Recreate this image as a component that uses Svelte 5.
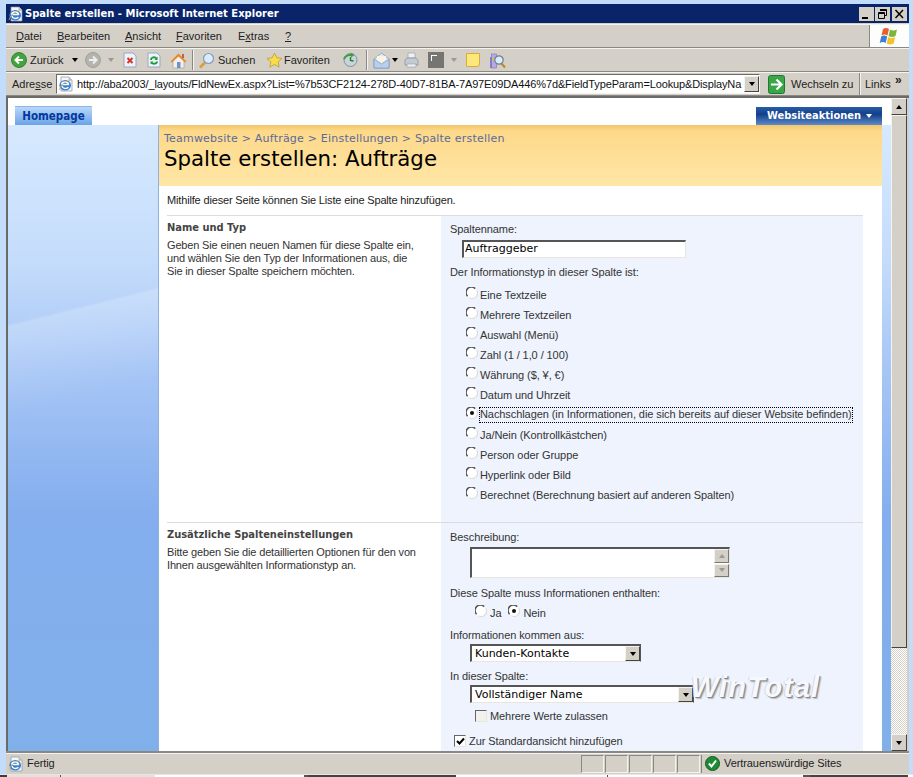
<script>
  const types = ['Eine Textzeile','Mehrere Textzeilen','Auswahl (Menü)','Zahl (1 / 1,0 / 100)','Währung ($, ¥, €)','Datum und Uhrzeit','Nachschlagen (in Informationen, die sich bereits auf dieser Website befinden)','Ja/Nein (Kontrollkästchen)','Person oder Gruppe','Hyperlink oder Bild','Berechnet (Berechnung basiert auf anderen Spalten)'];
  const selected = 6;
  const url = 'http://aba2003/_layouts/FldNewEx.aspx?List=%7b53CF2124-278D-40D7-81BA-7A97E09DA446%7d&FieldTypeParam=Lookup&DisplayNa';
</script>

{#snippet radio(on)}
  <svg class="radio" width="12" height="12" viewBox="0 0 12 12">
    <circle cx="6" cy="6" r="5.5" fill="#fff"/>
    <path d="M1.6 9.2A5.2 5.2 0 0 1 9.2 1.6" fill="none" stroke="#555" stroke-width="1.5"/>
    <path d="M10.6 3.4A5.2 5.2 0 0 1 3.4 10.6" fill="none" stroke="#dedcd6" stroke-width="1.1"/>
    {#if on}<circle cx="6" cy="6" r="2" fill="#111"/>{/if}
  </svg>
{/snippet}

{#snippet ie(size)}
  <svg width={size} height={size} viewBox="0 0 16 16">
    <path d="M3 1h8l3 3v11H3z" fill="#f4f6fa" stroke="#8a94a6" stroke-width=".7"/>
    <path d="M11 1v3h3" fill="#cdd6e6" stroke="#8a94a6" stroke-width=".5"/>
    <ellipse cx="7.2" cy="9.3" rx="5.8" ry="5.2" fill="#3a7fd0"/>
    <path d="M3.6 8.5h7.2M4 10c.4 2.6 4.6 3.2 6.4 1.3" stroke="#fff" stroke-width="1.4" fill="none"/>
    <path d="M3.6 8.4C4 5.4 9.6 5 10.8 8.4" stroke="#fff" stroke-width="1.4" fill="none"/>
    <path d="M1 14C2 10 7 5 13 4" stroke="#e6b93c" stroke-width=".8" fill="none"/>
  </svg>
{/snippet}

{#snippet dropBtn()}
  <span class="dropbtn"><i class="tri"></i></span>
{/snippet}

<div class="desktop">
  <div class="window">
    <div class="titlebar">
      <span class="ticon">{@render ie(16)}</span>
      <span class="ttext">Spalte erstellen - Microsoft Internet Explorer</span>
      <div class="wbtns">
        <span class="wbtn"><svg width="15" height="14" viewBox="0 0 15 14"><rect x="3" y="10" width="6" height="2" fill="#000"/></svg></span>
        <span class="wbtn"><svg width="15" height="14" viewBox="0 0 15 14"><path d="M5.5 2.5h6v6h-2M5.500 2v2M3.500 5.500h6v6h-6zM3.500 6.500h6M5.500 3.500h6" fill="none" stroke="#000"/></svg></span>
        <span class="wbtn last"><svg width="15" height="14" viewBox="0 0 15 14"><path d="M3.500 3l7.500 8M11 3l-7.500 8" stroke="#000" stroke-width="1.500"/></svg></span>
      </div>
    </div>

    <div class="menubar">
      <div class="menus">
        <span><u>D</u>atei</span><span><u>B</u>earbeiten</span><span><u>A</u>nsicht</span><span><u>F</u>avoriten</span><span>E<u>x</u>tras</span><span><u>?</u></span>
      </div>
      <div class="logo">
        <svg width="22" height="20" viewBox="0 0 22 20">
          <path d="M4 3c2-1.500 4-1.500 6 0l-1.500 6.500c-2-1.300-4-1.300-6 0z" fill="#e8602c"/>
          <path d="M11 3.500c2 1.300 4.500 1.300 7 0l-1.500 6.500c-2.500 1.300-5 1.300-7 0z" fill="#7cb53c"/>
          <path d="M2.200 10.500c2-1.300 4-1.300 6 0L6.700 17c-2-1.300-4-1.300-6 0z" fill="#3d7fd8"/>
          <path d="M9.200 11c2 1.300 4.500 1.300 7 0l-1.500 6.500c-2.500 1.300-5 1.300-7 0z" fill="#f2c230"/>
        </svg>
      </div>
    </div>

    <div class="toolbar">
      <svg class="i back" width="16" height="16" viewBox="0 0 16 16"><circle cx="8" cy="8" r="7.500" fill="#3fa53c" stroke="#1f7a2a" stroke-width=".8"/><path d="M12 8H5M8 4.500L4.500 8 8 11.500" stroke="#fff" stroke-width="2" fill="none"/></svg>
      <span class="tl zur">Zurück</span>
      <i class="tri a1"></i>
      <svg class="i fwd" width="16" height="16" viewBox="0 0 16 16"><circle cx="8" cy="8" r="7.500" fill="#b4b4ae" stroke="#98988f" stroke-width=".8"/><path d="M4 8h7M8 4.500L11.500 8 8 11.500" stroke="#eee" stroke-width="2" fill="none"/></svg>
      <i class="tri a2 gr"></i>
      <svg class="i stop" width="14" height="16" viewBox="0 0 14 16"><path d="M1 1h9l3 3v11H1z" fill="#eef2fa" stroke="#9aa6c0"/><path d="M4.500 6l5 5M9.500 6l-5 5" stroke="#d8352a" stroke-width="2"/></svg>
      <svg class="i ref" width="14" height="16" viewBox="0 0 14 16"><path d="M1 1h9l3 3v11H1z" fill="#eef2fa" stroke="#9aa6c0"/><path d="M4 8c0-3 4-3.500 5.500-1.500M10 9.500c0 2.500-4 3-5.500 1" stroke="#1e9a3c" stroke-width="1.800" fill="none"/><path d="M10.500 4.500v3.500H7.500M3.500 12.500V9.500h3" fill="#1e9a3c"/></svg>
      <svg class="i home" width="17" height="17" viewBox="0 0 17 17"><path d="M3 8v8h11V8L8.500 3z" fill="#f2f0ea" stroke="#a8a498" stroke-width=".7"/><path d="M.5 9.500L8.500 1.500l8 8-1.500 1L8.500 4.500 2 10.500z" fill="#e8862e"/><rect x="12" y="2" width="2" height="4" fill="#b8663a"/><rect x="7" y="10" width="3.500" height="6" fill="#6f93c8"/></svg>
      <span class="sep s1"></span>
      <svg class="i srch" width="17" height="17" viewBox="0 0 17 17"><circle cx="10.500" cy="6.500" r="5" fill="#dcecfb" stroke="#7f9cc0" stroke-width="1.200"/><path d="M7 10.500l-5 5" stroke="#d6a040" stroke-width="2.800"/></svg>
      <span class="tl such">Suchen</span>
      <svg class="i star" width="17" height="17" viewBox="0 0 17 17"><path d="M8.500 1l2.200 4.800 5.300.6-3.900 3.500 1.100 5.200-4.700-2.700-4.700 2.700 1.100-5.200L1 6.400l5.300-.6z" fill="#f8dc4a" stroke="#c09a30" stroke-width=".8"/></svg>
      <span class="tl fav">Favoriten</span>
      <svg class="i hist" width="16" height="16" viewBox="0 0 16 16"><circle cx="8.500" cy="8" r="6.500" fill="#c8d4dc" stroke="#7f93a4"/><path d="M1 6.500C3 3 6 1.500 9 2l-.5-1.500 4 2.500-3.500 2.500V4C6 3.500 4 5 3 7.500z" fill="#3e9e3e"/><path d="M8.500 5v3.500l3 .5" stroke="#2b7a2b" stroke-width="1.400" fill="none"/></svg>
      <span class="sep s2"></span>
      <svg class="i mail" width="17" height="17" viewBox="0 0 17 17"><path d="M1 7l7.500-6L16 7v9H1z" fill="#dbe8f8" stroke="#7f9cc8" stroke-width=".8"/><path d="M4 4h9v4l-4.500 3L4 8z" fill="#fbf3dc"/><path d="M1 7l7.500 5L16 7v9H1z" fill="#b8d0ee" stroke="#7f9cc8" stroke-width=".8"/></svg>
      <i class="tri a3"></i>
      <svg class="i prn" width="15" height="16" viewBox="0 0 15 16"><path d="M4 1h7v5H4z" fill="#eef0f4" stroke="#9aa2ad" stroke-width=".7"/><path d="M1 8l2-2h9l2 2v5H1z" fill="#c4cad2" stroke="#868e98" stroke-width=".7"/><path d="M3 12h9v3H3z" fill="#f0f2f5" stroke="#9aa2ad" stroke-width=".7"/></svg>
      <span class="graybox"><span></span></span>
      <i class="tri a4 gr"></i>
      <span class="note"></span>
      <svg class="i res" width="17" height="17" viewBox="0 0 17 17"><rect x="1" y="5" width="5" height="11" fill="#8a80c8"/><rect x="2.500" y="2" width="5" height="14" fill="#b4ace0" stroke="#6a62a8" stroke-width=".5"/><rect x="3" y="6" width="2" height="2" fill="#e8b840"/><circle cx="10" cy="8" r="4.200" fill="#d8ecfa" stroke="#6f7f92" stroke-width="1.200"/><path d="M12.500 11.500l3.500 4" stroke="#b88a30" stroke-width="2"/></svg>
    </div>

    <div class="addrbar">
      <span class="addrlbl">Adre<u>s</u>se</span>
      <div class="addr">
        <span class="addri">{@render ie(16)}</span>
        <span class="url">{url}</span>
        {@render dropBtn()}
      </div>
      <svg class="goi" width="17" height="19" viewBox="0 0 17 19"><rect x=".5" y=".5" width="16" height="18" rx="2" fill="#3aa648" stroke="#1f7a30"/><path d="M3 9.500h10M8.500 4.500l5 5-5 5" stroke="#fff" stroke-width="2.200" fill="none"/></svg>
      <span class="go">Wechseln zu</span>
      <span class="links">Links</span>
      <span class="chev">»</span>
    </div>

    <div class="viewport">
      <div class="page">
        <div class="tabs">
          <span class="tab">Homepage</span>
          <span class="actions">Websiteaktionen<i class="tri w"></i></span>
        </div>
        <div class="body">
          <div class="side"></div>
          <div class="main">
            <div class="head">
              <div class="crumb">Teamwebsite &gt; Aufträge &gt; Einstellungen &gt; Spalte erstellen</div>
              <h1>Spalte erstellen: Aufträge</h1>
            </div>
            <p class="intro">Mithilfe dieser Seite können Sie Liste eine Spalte hinzufügen.</p>

            <section class="sec one">
              <div class="info">
                <h2>Name und Typ</h2>
                <p>Geben Sie einen neuen Namen für diese Spalte ein,<br>und wählen Sie den Typ der Informationen aus, die<br>Sie in dieser Spalte speichern möchten.</p>
              </div>
              <div class="form">
                <div class="lbl">Spaltenname:</div>
                <div class="input name">Auftraggeber</div>
                <div class="lbl l2">Der Informationstyp in dieser Spalte ist:</div>
                <div class="types">
                  {#each types as t, i}
                    <div class="type">{@render radio(i === selected)}<span class:focus={i === selected}>{t}</span></div>
                  {/each}
                </div>
              </div>
            </section>

            <section class="sec two">
              <div class="info">
                <h2>Zusätzliche Spalteneinstellungen</h2>
                <p>Bitte geben Sie die detaillierten Optionen für den von<br>Ihnen ausgewählten Informationstyp an.</p>
              </div>
              <div class="form">
                <div class="lbl">Beschreibung:</div>
                <div class="input area">
                  <div class="spin"><span><i class="tri up gr"></i></span><span><i class="tri gr"></i></span></div>
                </div>
                <div class="lbl l3">Diese Spalte muss Informationen enthalten:</div>
                <div class="yn">{@render radio(false)}<span class="ja">Ja</span>{@render radio(true)}<span>Nein</span></div>
                <div class="lbl l4">Informationen kommen aus:</div>
                <div class="input sel s-a">Kunden-Kontakte{@render dropBtn()}</div>
                <div class="lbl l5">In dieser Spalte:</div>
                <div class="input sel s-b">Vollständiger Name{@render dropBtn()}</div>
                <div class="chk c-a"><span class="cb"></span>Mehrere Werte zulassen</div>
                <div class="chk c-b"><span class="cb"><svg width="9" height="9" viewBox="0 0 9 9"><path d="M1 4l2.500 2.500L8 1.500" fill="none" stroke="#000" stroke-width="2"/></svg></span>Zur Standardansicht hinzufügen</div>
              </div>
            </section>
          </div>
          <div class="strip"></div>
        </div>
        <div class="mark">WinTotal</div>
      </div>
      <div class="scroll">
        <span class="sb"><i class="tri up"></i></span>
        <span class="thumb"></span>
        <span class="track"></span>
        <span class="sb"><i class="tri"></i></span>
      </div>
    </div>

    <div class="status">
      <span class="sti">{@render ie(16)}</span>
      <span class="stt">Fertig</span>
      <div class="panes"><span></span><span></span><span></span><span></span><span></span></div>
      <div class="zone">
        <svg width="15" height="15" viewBox="0 0 15 15"><circle cx="7.500" cy="7.500" r="7" fill="#1f8a34" stroke="#115f22"/><path d="M4 7.500l2.500 3L11 4.500" fill="none" stroke="#fff" stroke-width="2"/></svg>
        <span>Vertrauenswürdige Sites</span>
      </div>
    </div>
  </div>
  <div class="taskedge"></div>
</div>

<style>
  :global(body) { margin: 0; background: #c3dcfa; overflow: hidden; }
  .desktop { width: 913px; height: 777px; padding: 4px 0 0 6px; box-sizing: border-box; position: relative; overflow: hidden; font: 11px/13px "Liberation Sans", sans-serif; color: #222; }
  .window { width: 903px; height: 770px; background: #d4d0c8; display: flex; flex-direction: column; }
  .window > * { flex: none; }
  .tri { display: inline-block; flex: none; width: 0; height: 0; border: 3px solid transparent; border-top: 4px solid #000; border-bottom: 0; }
  .tri.up { border-top: 0; border-bottom: 4px solid #000; }
  .tri.gr { border-top-color: #9a9a94; border-bottom-color: #9a9a94; }
  .titlebar { height: 19px; margin: 0 0 1px; background: #0a246a; display: flex; align-items: center; color: #fff; font: bold 11.1px/19px "DejaVu Sans Condensed", "Liberation Sans", sans-serif; }
  .ticon { width: 19px; display: flex; padding-left: 2px; box-sizing: border-box; }
  .ttext { flex: 1; white-space: nowrap; }
  .wbtns { display: flex; gap: 1px; margin-right: 2px; }
  .wbtn { width: 15px; height: 14px; background: #d4d0c8; display: block; }
  .wbtn.last { margin-left: 1px; }
  .wbtn svg { display: block; }
  .menubar { height: 24px; display: flex; justify-content: space-between; border-top: 1px solid #f4f3ef; border-bottom: 1px solid #8a8884; box-sizing: border-box; }
  .menus { display: grid; grid-template-columns: 41px 68px 51px 62px 47px auto; padding-left: 10px; align-items: center; }
  .logo { width: 39px; background: #fdfdfb; border-left: 1px solid #8a8884; display: flex; align-items: center; justify-content: center; }
  .toolbar { height: 24px; display: flex; align-items: center; border-top: 1px solid #f4f3ef; border-bottom: 1px solid #8a8884; box-sizing: border-box; }
  .toolbar .i { flex: none; }
  .back { margin-left: 5px; }
  .tl { font-size: 11px; flex: none; }
  .zur { margin-left: 3px; width: 36px; }
  .a1 { margin-left: 6px; }
  .fwd { margin-left: 7px; }
  .a2 { margin-left: 7px; }
  .stop { margin-left: 9px; }
  .ref { margin-left: 10px; }
  .home { margin-left: 9px; }
  .sep { width: 1px; height: 20px; background: #8a8884; box-shadow: 1px 0 #f4f3ef; flex: none; }
  .s1 { margin-left: 5px; }
  .srch { margin-left: 5px; }
  .such { margin-left: 3px; width: 37px; }
  .star { margin-left: 11px; }
  .fav { margin-left: 1px; width: 50px; }
  .hist { margin-left: 8px; }
  .s2 { margin-left: 8px; }
  .mail { margin-left: 6px; }
  .a3 { margin-left: 2px; }
  .prn { margin-left: 6px; }
  .graybox { width: 16px; height: 16px; background: #757571; margin-left: 9px; flex: none; position: relative; }
  .graybox span { position: absolute; left: 3px; top: 3px; width: 5px; height: 5px; border-left: 1px solid #fff; border-top: 1px solid #fff; }
  .a4 { margin-left: 7px; }
  .note { width: 12px; height: 12px; background: #fbe77a; border: 1px solid #d8ab3a; margin-left: 9px; flex: none; border-radius: 1px 1px 3px 1px; }
  .res { margin-left: 9px; }
  .addrbar { height: 24px; display: flex; align-items: center; border-top: 1px solid #f4f3ef; border-bottom: 1px solid #8a8884; box-sizing: border-box; }
  .addrlbl { margin-left: 6px; width: 44px; flex: none; }
  .addr { width: 704px; height: 20px; background: #fff; border: 1px solid; border-color: #6a6a66 #f4f3ef #f4f3ef #6a6a66; box-sizing: border-box; display: flex; align-items: center; flex: none; }
  .addri { display: flex; margin: 0 3px 0 1px; }
  .url { flex: 1; white-space: nowrap; color: #111; min-width: 0; letter-spacing: -.13px; }
  .dropbtn { width: 15px; height: 16px; background: #d4d0c8; border: 1px solid; border-color: #f4f3ef #444 #444 #f4f3ef; box-sizing: border-box; display: inline-flex; align-items: center; justify-content: center; flex: none; }
  .goi { margin-left: 8px; flex: none; }
  .go { margin-left: 6px; width: 68px; flex: none; letter-spacing: -.05px; }
  .links { border-left: 1px solid #8a8884; padding-left: 5px; height: 22px; line-height: 22px; box-shadow: inset 1px 0 #f4f3ef; width: 30px; box-sizing: border-box; flex: none; }
  .chev { font: bold 12px/12px "Liberation Sans", sans-serif; margin: -8px 0 0 6px; }
  .viewport { height: 655px; display: flex; border: 2px solid #6a6a66; border-right: 0; border-bottom: 0; overflow: hidden; box-sizing: border-box; position: relative; }
  .page { width: 883px; flex: none; display: flex; flex-direction: column; position: relative; overflow: hidden; }
  .tabs { height: 27px; flex: none; background: #fff; display: flex; justify-content: space-between; align-items: flex-end; padding: 0 9px 0 7px; }
  .tab { width: 77px; height: 19px; background: linear-gradient(#b8d8fa, #6ba3e6); color: #04389c; font: bold 11.5px/19px "DejaVu Sans Condensed", sans-serif; text-align: center; border-top: 1px solid #8fb5e4; box-sizing: border-box; }
  .actions { width: 126px; height: 18px; background: linear-gradient(#2a5da6, #123f8b 40%, #5c8bc6); color: #fff; font: bold 11px/18px "DejaVu Sans Condensed", sans-serif; padding-left: 11px; box-sizing: border-box; display: flex; align-items: center; gap: 5px; white-space: nowrap; }
  .tri.w { border-top-color: #fff; }
  .body { flex: 1; display: flex; min-height: 0; background: linear-gradient(#d6e9fe, #c4dcfb 22%, #a8c7f6 38%, #84aeee 62%, #80b0ea); position: relative; }
  .side { width: 151px; flex: none; background: linear-gradient(166deg, transparent 30%, rgba(255,255,255,.2) 30.5%, transparent 44%); border-right: 1px solid #8fb0dd; box-sizing: border-box; }
  .main { width: 723px; flex: none; background: #fff; overflow: hidden; }
  .strip { flex: 1; }
  .head { height: 61px; background: linear-gradient(#f4c46c 0, #fdd98a 6px, #ffe6a6); padding: 7px 0 0 5px; box-sizing: border-box; }
  .crumb { font: 11px/13px "DejaVu Sans", sans-serif; color: #5a6a9a; letter-spacing: .21px; white-space: nowrap; }
  h1 { margin: 0; font: normal 21.3px/27px "DejaVu Sans", sans-serif; color: #000; white-space: nowrap; }
  .intro { margin: 8px 0 8px 8px; height: 13px; white-space: nowrap; letter-spacing: -.16px; }
  .sec { margin-left: 8px; width: 696px; display: grid; grid-template-columns: 274px 422px; border-top: 1px solid #dcdcdc; }
  .one { height: 306px; }
  .two { height: 240px; }
  .info { padding-top: 5px; }
  .info h2 { margin: 0 0 5px; font: bold 11px/13px "DejaVu Sans Condensed", sans-serif; color: #444; white-space: nowrap; }
  .info p { margin: 0; white-space: nowrap; color: #333; letter-spacing: -.16px; }
  .form { background: #eef3fe; padding: 7px 0 0 9px; color: #333; letter-spacing: -.08px; }
  .two .form { padding-top: 8px; }
  .lbl { height: 13px; white-space: nowrap; }
  .input { background: #fff; border: 1px solid; border-color: #555 #e8e6e0 #e8e6e0 #555; border-width: 2px 1px 1px 2px; box-sizing: border-box; font: 11px/14px "DejaVu Sans", sans-serif; letter-spacing: 0; color: #000; white-space: nowrap; }
  .name { width: 224px; height: 18px; margin: 4px 0 0 12px; padding-left: 1px; }
  .l2 { margin-top: 8px; }
  .types { margin: 6px 0 0 16px; }
  .type { height: 20px; display: flex; align-items: center; gap: 2px; white-space: nowrap; }
  .radio { flex: none; margin-top: -5px; }
  .type .focus { outline: 1px dotted #000; outline-offset: 0; padding-bottom: 1px; }
  .area { width: 260px; height: 31px; margin: 3px 0 0 20px; display: flex; justify-content: flex-end; }
  .spin { width: 15px; display: flex; flex-direction: column; gap: 1px; }
  .spin span { flex: 1; background: #d4d0c8; border: 1px solid; border-color: #f4f3ef #777 #777 #f4f3ef; box-sizing: border-box; display: flex; align-items: center; justify-content: center; }
  .l3 { margin-top: 9px; }
  .yn { height: 14px; margin: 6px 0 0 25px; display: flex; align-items: center; gap: 3px; }
  .ja { margin-right: 4px; }
  .l4 { margin-top: 9px; }
  .sel { display: flex; align-items: center; justify-content: space-between; padding-left: 3px; border-color: #555 #555 #e8e6e0 #555; }
  .s-a { width: 171px; height: 18px; margin: 2px 0 0 20px; }
  .l5 { margin-top: 8px; }
  .s-b { width: 224px; height: 18px; margin: 2px 0 0 20px; }
  .sel .dropbtn { height: 15px; }
  .chk { display: flex; align-items: center; gap: 3px; white-space: nowrap; }
  .c-a { margin: 6px 0 0 25px; height: 14px; }
  .c-b { margin: 11px 0 0 4px; height: 14px; }
  .cb { width: 12px; height: 12px; background: #fff; border: 1px solid; border-color: #666 #e8e6e0 #e8e6e0 #666; box-sizing: border-box; display: flex; align-items: center; justify-content: center; flex: none; }
  .c-a .cb { background: #f2f1ec; }
  .mark { position: absolute; left: 683px; top: 572px; font: italic bold 29px/34px "Liberation Sans", sans-serif; letter-spacing: 1px; color: #f6f8ff; text-shadow: 1px 1px 0 #888, 2px 2px 1px #bbb, -1px 0 0 #d4d8e2; white-space: nowrap; }
  .scroll { width: 18px; flex: none; display: flex; flex-direction: column; background: #d4d0c8; }
  .sb { height: 17px; width: 16px; background: #d4d0c8; border: 1px solid; border-color: #f4f3ef #444 #444 #f4f3ef; box-sizing: border-box; display: flex; align-items: center; justify-content: center; flex: none; }
  .thumb { height: 533px; width: 16px; background: #d4d0c8; border: 1px solid; border-color: #f4f3ef #444 #444 #f4f3ef; box-sizing: border-box; flex: none; }
  .track { flex: 1; width: 16px; background: repeating-conic-gradient(#d4d0c8 0 25%, #fff 0 50%) 0 0 / 2px 2px; }
  .status { height: 23px; display: flex; align-items: center; border-top: 2px solid #8a8884; box-sizing: border-box; box-shadow: inset 0 1px #f4f3ef; letter-spacing: -.08px; }
  .sti { display: flex; margin: 0 3px 0 2px; }
  .stt { flex: 1; }
  .panes { display: flex; }
  .panes span { width: 23px; height: 18px; border: 1px solid; border-color: #8a8884 #f4f3ef #f4f3ef #8a8884; margin-right: 1px; box-sizing: border-box; }
  .zone { width: 208px; height: 18px; border-left: 1px solid #8a8884; display: flex; align-items: center; gap: 4px; padding-left: 3px; box-sizing: border-box; }
  .taskedge { position: absolute; left: 0; right: 0; bottom: 0; height: 3px; background: linear-gradient(90deg, #3c3c3c 0 7px, #e4e2dc 7px 60px, #555 60px 61px, #e4e2dc 61px 155px, #fff 155px 304px, #555 304px 308px, #444 308px 456px, #fff 456px 607px, #555 607px 608px, #fff 608px 803px, #555 803px 810px, #444 810px 908px, #fff 908px); border-top: 1px solid #e8e6e0; box-sizing: border-box; }
</style>
